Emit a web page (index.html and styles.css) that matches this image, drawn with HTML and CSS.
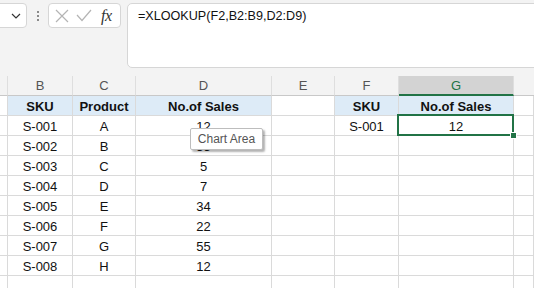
FILE: index.html
```html
<!DOCTYPE html>
<html>
<head>
<meta charset="utf-8">
<link rel="stylesheet" href="styles.css">
</head>
<body>
<div class="toolbar">
  <div class="namebox">
    <svg class="chev" width="10" height="6" viewBox="0 0 10 6"><path d="M1 1 L5 5 L9 1" fill="none" stroke="#333" stroke-width="1.2"/></svg>
  </div>
  <div class="dots"><span></span><span></span><span></span></div>
  <div class="fxbox">
    <svg class="ico" width="14" height="14" viewBox="0 0 14 14"><path d="M1 1 L13 13 M13 1 L1 13" stroke="#b4b4b4" stroke-width="1.2" fill="none"/></svg>
    <svg class="ico" width="16" height="13" viewBox="0 0 16 13"><path d="M1 6 L6 11.5 L15 1" stroke="#b4b4b4" stroke-width="1.2" fill="none"/></svg>
    <span class="fx">fx</span>
  </div>
  <div class="formula">=XLOOKUP(F2,B2:B9,D2:D9)</div>
</div>
<div class="sheet">
  <div class="ch"></div><div class="ch">B</div><div class="ch">C</div><div class="ch">D</div><div class="ch">E</div><div class="ch">F</div><div class="ch chsel">G</div><div class="ch last"></div>

  <div class="c"></div><div class="c hd">SKU</div><div class="c hd">Product</div><div class="c hd">No.of Sales</div><div class="c"></div><div class="c hd">SKU</div><div class="c hd">No.of Sales</div><div class="c"></div>

  <div class="c"></div><div class="c">S-001</div><div class="c">A</div><div class="c tipcell">12<div class="tip">Chart Area</div></div><div class="c"></div><div class="c">S-001</div><div class="c sel">12</div><div class="c"></div>
  <div class="c"></div><div class="c">S-002</div><div class="c">B</div><div class="c">33</div><div class="c"></div><div class="c"></div><div class="c"></div><div class="c"></div>
  <div class="c"></div><div class="c">S-003</div><div class="c">C</div><div class="c">5</div><div class="c"></div><div class="c"></div><div class="c"></div><div class="c"></div>
  <div class="c"></div><div class="c">S-004</div><div class="c">D</div><div class="c">7</div><div class="c"></div><div class="c"></div><div class="c"></div><div class="c"></div>
  <div class="c"></div><div class="c">S-005</div><div class="c">E</div><div class="c">34</div><div class="c"></div><div class="c"></div><div class="c"></div><div class="c"></div>
  <div class="c"></div><div class="c">S-006</div><div class="c">F</div><div class="c">22</div><div class="c"></div><div class="c"></div><div class="c"></div><div class="c"></div>
  <div class="c"></div><div class="c">S-007</div><div class="c">G</div><div class="c">55</div><div class="c"></div><div class="c"></div><div class="c"></div><div class="c"></div>
  <div class="c"></div><div class="c">S-008</div><div class="c">H</div><div class="c">12</div><div class="c"></div><div class="c"></div><div class="c"></div><div class="c"></div>
  <div class="c"></div><div class="c"></div><div class="c"></div><div class="c"></div><div class="c"></div><div class="c"></div><div class="c"></div><div class="c"></div>
</div>
</body>
</html>
```
FILE: styles.css
```css
html, body {
  margin: 0;
  padding: 0;
  background: #ffffff;
  overflow: hidden;
  width: 534px;
  height: 288px;
  font-family: "Liberation Sans", Arial, sans-serif;
}
.toolbar {
  height: 76px;
  background: #f3f3f3;
  display: flex;
  align-items: flex-start;
  padding-top: 3px;
  box-sizing: border-box;
}
.namebox {
  width: 40px;
  height: 25px;
  margin-left: -13px;
  background: #fff;
  border: 1px solid #d6d6d6;
  border-radius: 4px;
  box-sizing: border-box;
  display: flex;
  align-items: center;
  justify-content: flex-end;
  padding-right: 5px;
}
.dots {
  width: 21px;
  height: 25px;
  display: flex;
  flex-direction: column;
  align-items: center;
  justify-content: center;
  gap: 2px;
}
.dots span {
  width: 2px;
  height: 2px;
  background: #8a8a8a;
}
.fxbox {
  width: 73px;
  height: 25px;
  background: #fff;
  border: 1px solid #d6d6d6;
  border-radius: 4px;
  box-sizing: border-box;
  display: flex;
  align-items: center;
  padding-left: 6px;
  gap: 7px;
}
.fx {
  font-family: "Liberation Serif", "DejaVu Serif", serif;
  font-style: italic;
  font-size: 16px;
  color: #333;
  margin-left: 2px;
  letter-spacing: -0.5px;
}
.formula {
  margin-left: 6px;
  flex: 1;
  height: 65px;
  margin-right: -10px;
  background: #fff;
  border: 1px solid #d6d6d6;
  border-radius: 5px;
  box-sizing: border-box;
  padding: 5px 0 0 10px;
  font-size: 12.6px;
  color: #111;
}
.sheet {
  display: grid;
  grid-template-columns: 8px 65px 63px 136px 63px 64px 115px 1fr;
  grid-auto-rows: 20px;
  font-size: 13px;
  color: #111;
}
.ch {
  background: #f3f3f3;
  border-right: 1px solid #dedede;
  border-bottom: 1px solid #c8c8c8;
  box-sizing: border-box;
  display: flex;
  align-items: center;
  justify-content: center;
  color: #555;
  font-size: 13px;
}
.ch.last { border-right: none; }
.chsel {
  background: #d3d3d3;
  border-bottom: 2px solid #217346;
  color: #217346;
}
.c {
  border-right: 1px solid #dadada;
  border-bottom: 1px solid #dadada;
  box-sizing: border-box;
  display: flex;
  align-items: center;
  justify-content: center;
  padding-top: 1px;
}
.hd {
  background: #ddebf7;
  font-weight: bold;
}
.sel {
  position: relative;
}
.sel::after {
  content: "";
  position: absolute;
  left: -2px;
  top: -2px;
  right: -1px;
  bottom: -1px;
  border: 2px solid #217346;
}
.sel::before {
  content: "";
  position: absolute;
  right: -4px;
  bottom: -4px;
  width: 5px;
  height: 5px;
  background: #217346;
  border: 1px solid #fff;
  z-index: 2;
}
.tipcell {
  position: relative;
}
.tip {
  position: absolute;
  left: 54px;
  top: 12px;
  width: 73px;
  height: 22px;
  box-sizing: border-box;
  background: #fff;
  border: 1px solid #bdbdbd;
  border-radius: 2px;
  box-shadow: 2px 2px 2px rgba(0,0,0,0.3);
  font-size: 12px;
  color: #555;
  display: flex;
  align-items: center;
  justify-content: center;
  z-index: 3;
}
```
